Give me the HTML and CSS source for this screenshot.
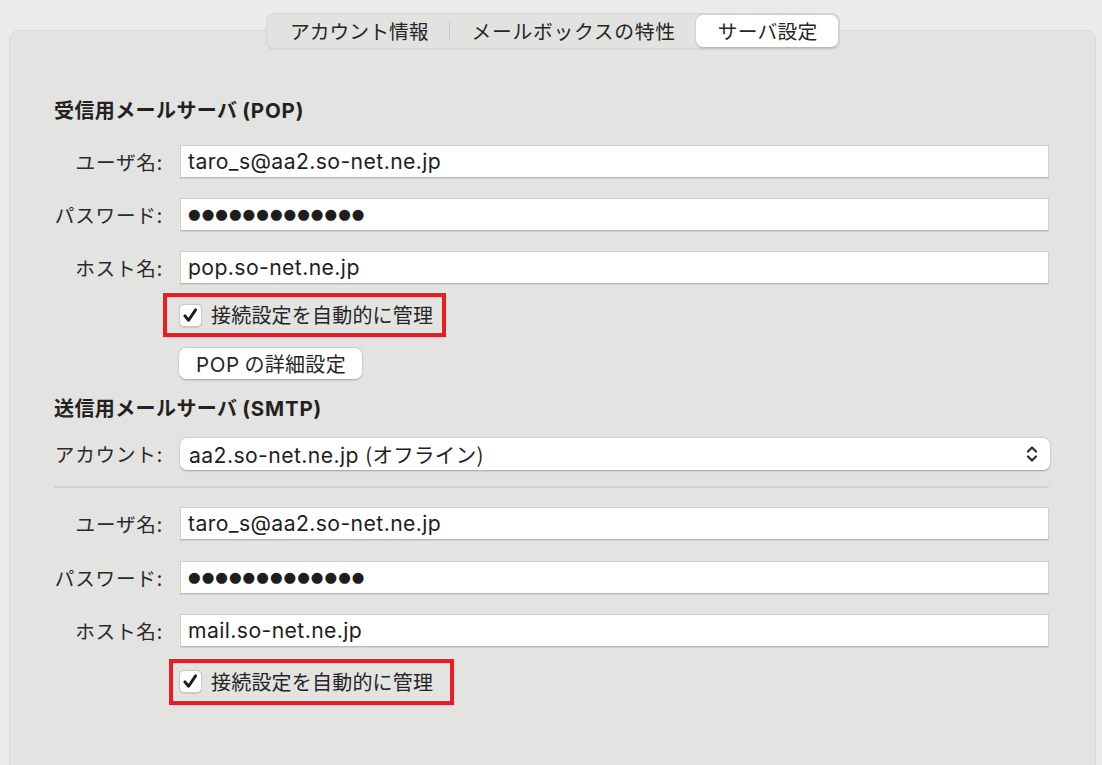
FILE: index.html
```html
<!DOCTYPE html>
<html lang="ja">
<head>
<meta charset="utf-8">
<title>サーバ設定</title>
<link rel="stylesheet" href="styles.css">
</head>
<body>
<div class="window">
  <div class="tabs-row">
    <div class="tabs">
      <div class="tab">アカウント情報</div>
      <div class="tab-divider"></div>
      <div class="tab tab-wide">メールボックスの特性</div>
      <div class="tab tab-active">サーバ設定</div>
    </div>
  </div>
  <div class="panel">
    <h2 class="section-title">受信用メールサーバ <span class="latin">(POP)</span></h2>
    <div class="form">
      <div class="label">ユーザ名:</div>
      <div class="field"><div class="input">taro_s@aa2.so-net.ne.jp</div></div>
      <div class="label">パスワード:</div>
      <div class="field"><div class="input input-dots">●●●●●●●●●●●●●</div></div>
      <div class="label">ホスト名:</div>
      <div class="field"><div class="input">pop.so-net.ne.jp</div></div>
      <div class="label"></div>
      <div class="field field-check">
        <div class="highlight highlight-pop">
          <span class="checkbox"><svg viewBox="0 0 24 24" width="23" height="23"><path d="M5.6 12.4 L9.8 17.4 L17.8 5.6" fill="none" stroke="#1d1d1d" stroke-width="3.4" stroke-linecap="round" stroke-linejoin="round"/></svg></span>
          <span class="check-label">接続設定を自動的に管理</span>
        </div>
      </div>
      <div class="label"></div>
      <div class="field field-button"><div class="button"><span class="latin">POP</span> の詳細設定</div></div>
    </div>

    <h2 class="section-title section-title-2">送信用メールサーバ <span class="latin">(SMTP)</span></h2>
    <div class="form">
      <div class="label">アカウント:</div>
      <div class="field">
        <div class="select">
          <span class="select-text">aa2.so-net.ne.jp <span class="cjk">(オフライン)</span></span>
          <svg class="chevron" viewBox="0 0 14 20" width="14" height="20"><path d="M3 7.5 L7 3.5 L11 7.5 M3 12.5 L7 16.5 L11 12.5" fill="none" stroke="#2a2a2a" stroke-width="2.2" stroke-linecap="round" stroke-linejoin="round"/></svg>
        </div>
      </div>
    </div>
    <div class="separator"></div>
    <div class="form form-smtp">
      <div class="label">ユーザ名:</div>
      <div class="field"><div class="input">taro_s@aa2.so-net.ne.jp</div></div>
      <div class="label">パスワード:</div>
      <div class="field"><div class="input input-dots">●●●●●●●●●●●●●</div></div>
      <div class="label">ホスト名:</div>
      <div class="field"><div class="input">mail.so-net.ne.jp</div></div>
      <div class="label"></div>
      <div class="field field-check2">
        <div class="highlight highlight-smtp">
          <span class="checkbox"><svg viewBox="0 0 24 24" width="23" height="23"><path d="M5.6 12.4 L9.8 17.4 L17.8 5.6" fill="none" stroke="#1d1d1d" stroke-width="3.4" stroke-linecap="round" stroke-linejoin="round"/></svg></span>
          <span class="check-label">接続設定を自動的に管理</span>
        </div>
      </div>
    </div>
  </div>
</div>
</body>
</html>
```
FILE: styles.css
```css
html, body {
  margin: 0;
  padding: 0;
  height: 100%;
  overflow: hidden;
}
body {
  background: #ecebea;
  font-family: "Noto Sans CJK JP", "Liberation Sans", sans-serif;
  color: #262626;
}
.window {
  padding-top: 13px;
  height: 100%;
  box-sizing: border-box;
  overflow: hidden;
}
.tabs-row {
  display: flex;
  padding-left: 266px;
  position: relative;
  z-index: 1;
}
.tabs {
  display: flex;
  align-items: center;
  height: 34px;
  padding: 0 1px;
  background: #e2e2e1;
  border: 1px solid #d6d6d5;
  border-radius: 8px;
  box-shadow: 0 1px 1px rgba(0,0,0,0.06);
}
.tab {
  font-size: 19.8px;
  line-height: 32px;
  padding: 0 21px 0 22px;
  color: #262626;
  white-space: nowrap;
}
.tab-wide {
  letter-spacing: 0.7px;
  padding: 0 20px 0 21px;
}
.tab-divider {
  width: 1px;
  height: 20px;
  background: #c9c9c8;
}
.tab-active {
  background: #ffffff;
  border-radius: 7px;
  box-shadow: 0 0.5px 2px rgba(0,0,0,0.25);
  padding: 0 21px 0 22px;
  letter-spacing: 0.2px;
}
.panel {
  margin: -19px 6px 0 9px;
  height: 800px;
  background: #e3e3e2;
  border: 1px solid #d9d9d8;
  border-radius: 10px;
  padding: 66px 46px 0 44px;
  box-sizing: border-box;
}
.section-title {
  margin: 0 0 21px 0;
  font-size: 20px;
  font-weight: bold;
  line-height: 26px;
  color: #222;
  letter-spacing: 0.4px;
}
.section-title .latin {
  font-family: "Inter", "Liberation Sans", sans-serif;
  font-weight: 700;
  font-size: 20.5px;
  letter-spacing: 0.8px;
}
.section-title-2 {
  margin-top: 16px;
  margin-bottom: 15px;
}
.form {
  display: grid;
  grid-template-columns: 108px 1fr;
  column-gap: 18px;
  row-gap: 20px;
  align-items: center;
}
.label {
  text-align: right;
  font-size: 19.6px;
  line-height: 33px;
  letter-spacing: 0.8px;
  color: #2a2a2a;
  white-space: nowrap;
  margin-right: -1px;
}
.input {
  height: 33px;
  box-sizing: border-box;
  background: #ffffff;
  border: 1px solid #cfcfce;
  border-bottom-color: #b9b9b8;
  box-shadow: 0 1px 0 rgba(0,0,0,0.08);
  padding: 0 7px;
  font-family: "Inter", "Liberation Sans", sans-serif;
  font-size: 21.2px;
  letter-spacing: 0.4px;
  line-height: 31px;
  color: #1e1e1e;
}
.input-dots {
  font-family: "DejaVu Sans", sans-serif;
  font-size: 14.5px;
  letter-spacing: 1px;
  line-height: 31px;
}
.field-check {
  margin-top: -11px;
  margin-left: -17px;
}
.field-check2 {
  margin-top: -9px;
  margin-left: -11px;
}
.highlight {
  display: inline-flex;
  align-items: center;
  border: 4px solid #ec1c24;
  box-sizing: border-box;
}
.highlight-pop {
  height: 44px;
  padding: 0 9px 0 12px;
}
.highlight-smtp {
  height: 46px;
  padding: 0 17px 0 6px;
}
.checkbox {
  width: 23px;
  height: 23px;
  box-sizing: border-box;
  background: #fff;
  border: 1px solid #cacac9;
  border-radius: 5px;
  display: flex;
  align-items: center;
  justify-content: center;
  box-shadow: 0 0.5px 1px rgba(0,0,0,0.12);
}
.checkbox svg {
  display: block;
}
.check-label {
  margin-left: 9px;
  font-size: 20px;
  line-height: 26px;
  letter-spacing: 0.2px;
  color: #262626;
}
.field-button {
  margin-top: -9px;
}
.button {
  display: inline-block;
  height: 31px;
  box-sizing: border-box;
  background: #fff;
  border-radius: 7px;
  box-shadow: 0 0.5px 2px rgba(0,0,0,0.3);
  padding: 0 16px 0 17px;
  font-size: 20px;
  line-height: 31px;
  letter-spacing: 0.3px;
  color: #262626;
  margin-left: -1px;
}
.button .latin {
  font-family: "Inter", "Liberation Sans", sans-serif;
  font-size: 20.5px;
  letter-spacing: 0.6px;
}
.select {
  height: 32px;
  box-sizing: border-box;
  background: #fff;
  border-radius: 7px;
  box-shadow: 0 0.5px 2px rgba(0,0,0,0.3);
  display: flex;
  align-items: center;
  justify-content: space-between;
  padding: 0 11px 0 9px;
  font-family: "Inter", "Liberation Sans", sans-serif;
  font-size: 21.2px;
  letter-spacing: 0.4px;
  color: #1e1e1e;
  margin-right: -1px;
}
.select-text {
  white-space: nowrap;
}
.select .cjk {
  font-family: "Noto Sans CJK JP", sans-serif;
  font-size: 20.5px;
  letter-spacing: 0.3px;
}
.chevron {
  display: block;
}
.separator {
  height: 2px;
  background: #d3d3d2;
  margin: 16px 0 19px 0;
}
.form-smtp {
  row-gap: 20.5px;
}
```
